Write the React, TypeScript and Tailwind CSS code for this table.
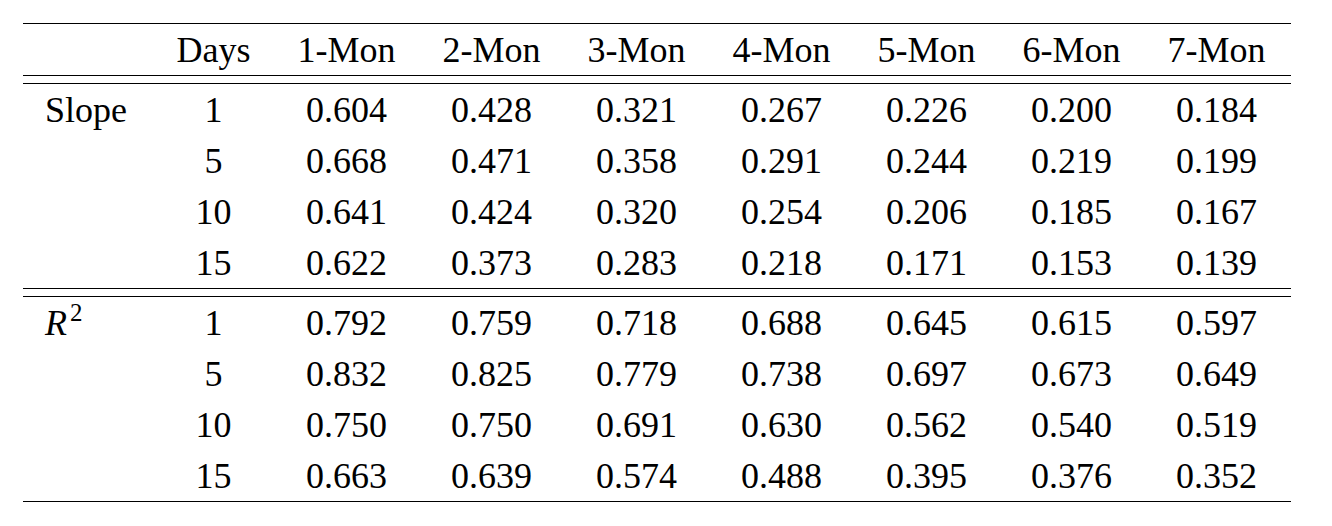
import type { ReactNode } from 'react';

const columns = ['1-Mon', '2-Mon', '3-Mon', '4-Mon', '5-Mon', '6-Mon', '7-Mon'];

type Row = { days: string; values: string[] };

const slopeRows: Row[] = [
  { days: '1', values: ['0.604', '0.428', '0.321', '0.267', '0.226', '0.200', '0.184'] },
  { days: '5', values: ['0.668', '0.471', '0.358', '0.291', '0.244', '0.219', '0.199'] },
  { days: '10', values: ['0.641', '0.424', '0.320', '0.254', '0.206', '0.185', '0.167'] },
  { days: '15', values: ['0.622', '0.373', '0.283', '0.218', '0.171', '0.153', '0.139'] },
];

const r2Rows: Row[] = [
  { days: '1', values: ['0.792', '0.759', '0.718', '0.688', '0.645', '0.615', '0.597'] },
  { days: '5', values: ['0.832', '0.825', '0.779', '0.738', '0.697', '0.673', '0.649'] },
  { days: '10', values: ['0.750', '0.750', '0.691', '0.630', '0.562', '0.540', '0.519'] },
  { days: '15', values: ['0.663', '0.639', '0.574', '0.488', '0.395', '0.376', '0.352'] },
];

const serif = { fontFamily: 'Liberation Serif' };

function Cell({ children }: { children?: ReactNode }) {
  return (
    <div className="text-center text-[36px] font-['Liberation_Serif']" style={serif}>
      {children}
    </div>
  );
}

function LabelCell({ children }: { children?: ReactNode }) {
  return (
    <div className="pl-[22px] text-[36px] font-['Liberation_Serif']" style={serif}>
      {children}
    </div>
  );
}

function DoubleRule() {
  return <div className="h-[9px] border-t border-b border-black" />;
}

function Group({ label, rows }: { label: ReactNode; rows: Row[] }) {
  return (
    <div>
      <DoubleRule />
      {rows.map((r, ri) => (
        <div key={ri} className="grid grid-cols-[130px_121px_repeat(7,145px)] h-[51px] items-center">
          <LabelCell>{ri === 0 ? label : null}</LabelCell>
          <Cell>{r.days}</Cell>
          {r.values.map((v, vi) => (
            <Cell key={vi}>{v}</Cell>
          ))}
        </div>
      ))}
    </div>
  );
}

export default function App() {
  return (
    <div className="bg-white w-[1332px] h-[526px] pt-[23px] pl-[23px] text-black leading-none font-['Liberation_Serif']">
      <div className="w-[1268px] border-t border-b border-black">
        <div className="grid grid-cols-[130px_121px_repeat(7,145px)] h-[51px] items-center">
          <LabelCell />
          <Cell>Days</Cell>
          {columns.map((c) => (
            <Cell key={c}>{c}</Cell>
          ))}
        </div>

        <Group label="Slope" rows={slopeRows} />
        <Group
          label={
            <span>
              <span className="italic">R</span>
              <span className="inline-block align-top text-[25px] -mt-[5px] ml-[3px]">2</span>
            </span>
          }
          rows={r2Rows}
        />
      </div>
    </div>
  );
}
